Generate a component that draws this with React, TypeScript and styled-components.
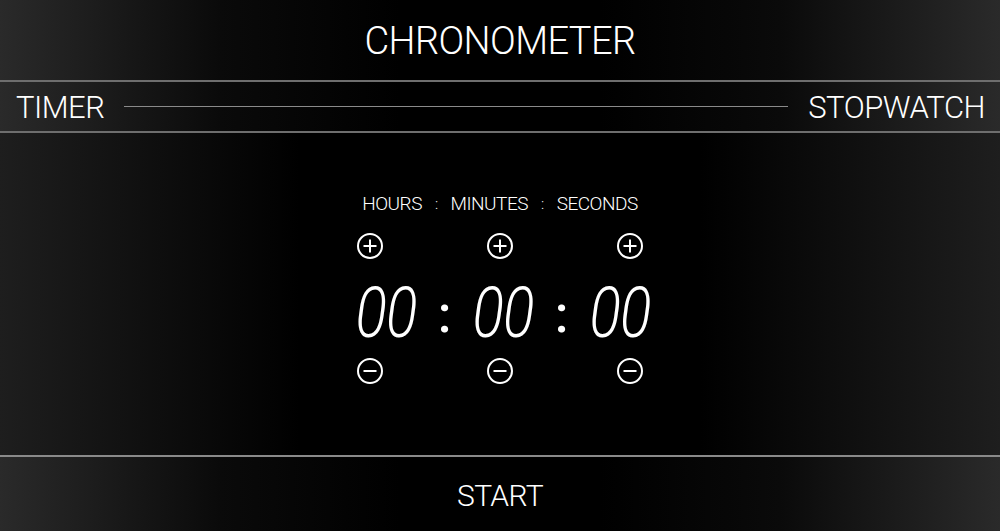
import { styled, createGlobalStyle } from 'styled-components';

const GlobalStyle = createGlobalStyle`
  html, body {
    margin: 0;
    padding: 0;
    height: 100%;
    background: #000;
  }
  body {
    font-family: Roboto, 'Liberation Sans', sans-serif;
    color: #fff;
  }
`;

const edgeFade = `linear-gradient(to right, #2a2a2a 0%, #0a0a0a 22%, #000 40%, #000 60%, #0a0a0a 78%, #2a2a2a 100%)`;

const StyledScreen = styled.div`
  width: 1000px;
  height: 531px;
  display: flex;
  flex-direction: column;
  background: ${edgeFade};
  overflow: hidden;
`;

const StyledHeader = styled.header`
  height: 80px;
  display: flex;
  align-items: center;
  justify-content: center;
  border-bottom: 2px solid #6e6e6e;
`;

const StyledTitle = styled.h1`
  margin: 0;
  font-weight: 300;
  font-size: 38px;
  letter-spacing: -0.6px;
  padding-top: 2px;
`;

const StyledNav = styled.nav`
  height: 49px;
  display: flex;
  align-items: center;
  gap: 18px;
  padding: 0 15px 0 16px;
  border-bottom: 2px solid #6e6e6e;
`;

const StyledTab = styled.span`
  font-weight: 300;
  font-size: 31px;
  letter-spacing: -0.5px;
  padding-top: 2px;
`;

const StyledTrack = styled.div`
  flex: 1;
  height: 1px;
  background: #8a8a8a;
  margin: 0 2px;
`;

const StyledMain = styled.main`
  flex: 1;
  display: flex;
  flex-direction: column;
  align-items: center;
  padding-top: 59px;
  background: linear-gradient(to right, #1e1e1e 0%, #000 30%, #000 70%, #1e1e1e 100%);
`;

const StyledLabels = styled.div`
  display: flex;
  align-items: center;
  gap: 13px;
  font-weight: 300;
  font-size: 19px;
  letter-spacing: -0.5px;
`;

const StyledSep = styled.span`
  font-size: 15px;
`;

const StyledIconRow = styled.div<{ $top: number }>`
  width: 286px;
  display: flex;
  justify-content: space-between;
  margin-top: ${(p) => p.$top}px;
`;

const StyledIconButton = styled.button`
  width: 26px;
  height: 26px;
  padding: 0;
  border: none;
  background: none;
  color: #fff;
  cursor: pointer;
  display: flex;
`;

const StyledDigits = styled.div`
  display: flex;
  align-items: center;
  margin-top: 22px;
  margin-left: 6px;
  height: 64px;
`;

const StyledPair = styled.span`
  display: inline-block;
  width: 84px;
  text-align: center;
  font-weight: 300;
  font-style: italic;
  font-size: 71px;
  line-height: 64px;
  letter-spacing: -1px;
  transform: scaleX(0.82);
`;

const StyledColon = styled.span`
  display: inline-block;
  width: 33px;
  text-align: center;
  font-weight: 500;
  font-size: 52px;
  line-height: 64px;
  margin-top: 4px;
`;

const StyledFooter = styled.footer`
  height: 74px;
  display: flex;
  align-items: center;
  justify-content: center;
  border-top: 2px solid #8a8a8a;
`;

const StyledStart = styled.button`
  background: none;
  border: none;
  color: #fff;
  font-family: Roboto, 'Liberation Sans', sans-serif;
  font-weight: 300;
  font-size: 30px;
  letter-spacing: -0.6px;
  padding: 2px 0 0;
  cursor: pointer;
`;

const CircleIcon = ({ plus }: { plus?: boolean }) => (
  <svg width="26" height="26" viewBox="0 0 26 26" fill="none" stroke="currentColor" strokeWidth="2">
    <circle cx="13" cy="13" r="12" />
    <line x1="6.5" y1="13" x2="19.5" y2="13" />
    {plus && <line x1="13" y1="6.5" x2="13" y2="19.5" />}
  </svg>
);

const units = ['hours', 'minutes', 'seconds'];

export default function App() {
  return (
    <>
      <GlobalStyle />
      <StyledScreen>
        <StyledHeader>
          <StyledTitle>CHRONOMETER</StyledTitle>
        </StyledHeader>
        <StyledNav>
          <StyledTab>TIMER</StyledTab>
          <StyledTrack />
          <StyledTab>STOPWATCH</StyledTab>
        </StyledNav>
        <StyledMain>
          <StyledLabels>
            <span>HOURS</span>
            <StyledSep>:</StyledSep>
            <span>MINUTES</span>
            <StyledSep>:</StyledSep>
            <span>SECONDS</span>
          </StyledLabels>
          <StyledIconRow $top={18}>
            {units.map((u) => (
              <StyledIconButton key={u} aria-label={`add ${u}`}>
                <CircleIcon plus />
              </StyledIconButton>
            ))}
          </StyledIconRow>
          <StyledDigits>
            <StyledPair>00</StyledPair>
            <StyledColon>:</StyledColon>
            <StyledPair>00</StyledPair>
            <StyledColon>:</StyledColon>
            <StyledPair>00</StyledPair>
          </StyledDigits>
          <StyledIconRow $top={13}>
            {units.map((u) => (
              <StyledIconButton key={u} aria-label={`remove ${u}`}>
                <CircleIcon />
              </StyledIconButton>
            ))}
          </StyledIconRow>
        </StyledMain>
        <StyledFooter>
          <StyledStart>START</StyledStart>
        </StyledFooter>
      </StyledScreen>
    </>
  );
}
